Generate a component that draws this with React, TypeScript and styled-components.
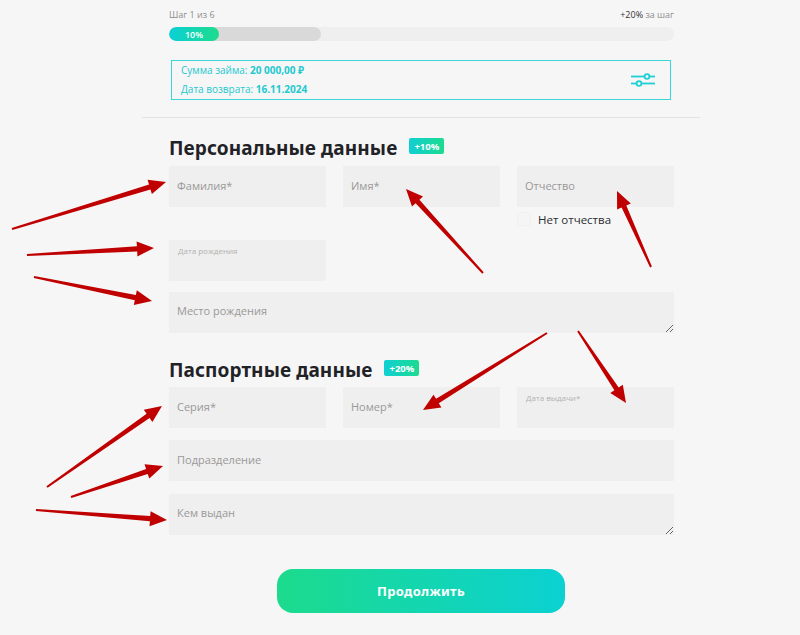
import styled, { createGlobalStyle } from "styled-components";

const Global = createGlobalStyle`
  html, body {
    margin: 0;
    padding: 0;
    background: #f6f6f6;
  }
  body {
    font-family: "Open Sans", "Noto Sans", Arial, sans-serif;
  }
  * {
    box-sizing: border-box;
  }
`;

const Page = styled.div`
  position: relative;
  width: 800px;
  height: 635px;
  overflow: hidden;
`;

const Wrapper = styled.div`
  margin-left: 142px;
  width: 558px;
  padding-top: 9px;
`;

const Column = styled.div`
  padding: 0 26px 0 27px;
`;

const StepRow = styled.div`
  display: flex;
  justify-content: space-between;
  font-size: 9px;
  line-height: 12px;
  color: #8d8d8d;
  b {
    font-weight: 400;
    color: #333;
  }
`;

const Track = styled.div`
  position: relative;
  margin-top: 6px;
  height: 14px;
  border-radius: 7px;
  background: #efefef;
  overflow: hidden;
`;

const Passed = styled.div`
  width: 152px;
  height: 100%;
  border-radius: 7px;
  background: #d9d9d9;
`;

const Fill = styled.div`
  position: absolute;
  left: 0;
  top: 0;
  height: 100%;
  border-radius: 7px;
  background: linear-gradient(90deg, #0ccfd6, #1ddc8c);
  color: #fff;
  font-size: 9px;
  font-weight: 600;
  display: flex;
  align-items: center;
  justify-content: center;
`;

const InfoBox = styled.div`
  margin: 19px 3px 0 2px;
  height: 40px;
  border: 1px solid #3ad6d8;
  display: flex;
  align-items: center;
  justify-content: space-between;
  padding: 0 14px 0 9px;
`;

const InfoLines = styled.div`
  display: flex;
  flex-direction: column;
  gap: 6px;
  font-size: 10px;
  line-height: 13px;
  color: #22c9d0;
  b {
    font-weight: 700;
  }
`;

const Divider = styled.div`
  margin-top: 17px;
  height: 1px;
  background: #e2e2e2;
`;

const Heading = styled.div<{ $top: number }>`
  display: flex;
  align-items: center;
  gap: 12px;
  margin-top: ${(p) => p.$top}px;
  height: 20px;
  h2 {
    margin: 0;
    font-family: "Noto Sans", "Open Sans", sans-serif;
    font-size: 19px;
    font-weight: 700;
    color: #1f2226;
    letter-spacing: 0.1px;
  }
`;

const Badge = styled.span`
  display: inline-flex;
  align-items: center;
  height: 16px;
  padding: 0 5px;
  border-radius: 2px;
  background: linear-gradient(90deg, #10cfd3, #1cdb90);
  color: #fff;
  font-size: 9.5px;
  font-weight: 700;
  margin-top: -4px;
`;

const Row = styled.div<{ $top: number }>`
  display: grid;
  grid-template-columns: repeat(3, 157px);
  column-gap: 17px;
  margin-top: ${(p) => p.$top}px;
`;

const Input = styled.input<{ $top?: number }>`
  display: block;
  width: 100%;
  height: 41px;
  margin-top: ${(p) => p.$top ?? 0}px;
  border: none;
  outline: none;
  background: #efefef;
  padding: 0 8px 3px;
  font-family: "Open Sans", sans-serif;
  font-size: 11px;
  &::placeholder {
    color: #9a9898;
  }
`;

const Area = styled.textarea<{ $top: number }>`
  display: block;
  width: 100%;
  height: 41px;
  margin-top: ${(p) => p.$top}px;
  border: none;
  outline: none;
  background: #efefef;
  padding: 12px 8px 0;
  resize: vertical;
  font-family: "Open Sans", sans-serif;
  font-size: 11px;
  line-height: 14px;
  &::placeholder {
    color: #9a9898;
  }
`;

const DateField = styled.div<{ $top?: number }>`
  height: 41px;
  margin-top: ${(p) => p.$top ?? 0}px;
  background: #efefef;
  padding: 5px 9px 0;
  font-size: 8px;
  color: #b3b1b1;
`;

const CheckRow = styled.label`
  grid-column: 3;
  display: flex;
  align-items: center;
  gap: 7px;
  margin-top: 4px;
  height: 16px;
  font-size: 11.5px;
  color: #2a2d31;
`;

const Box = styled.span`
  width: 14px;
  height: 14px;
  border: 1px solid #f1f1f1;
  background: #f5f5f5;
`;

const ButtonRow = styled.div`
  display: flex;
  justify-content: center;
  margin-top: 34px;
`;

const Button = styled.button`
  width: 288px;
  height: 44px;
  border: none;
  border-radius: 16px;
  background: linear-gradient(90deg, #1cdb8d, #0bd1d2);
  color: #fff;
  font-family: "Noto Sans", "Open Sans", sans-serif;
  font-size: 13px;
  font-weight: 700;
  letter-spacing: 0.3px;
`;

const Overlay = styled.svg`
  position: absolute;
  left: 0;
  top: 0;
  pointer-events: none;
`;

function Sliders() {
  return (
    <svg width="26" height="14" viewBox="0 0 26 14" fill="none" stroke="#1fd0d6" strokeWidth="1.8">
      <line x1="1" y1="3.5" x2="25" y2="3.5" />
      <line x1="1" y1="10.5" x2="25" y2="10.5" />
      <circle cx="17" cy="3.5" r="2.4" fill="#f6f6f6" />
      <circle cx="9" cy="10.5" r="2.4" fill="#f6f6f6" />
    </svg>
  );
}

type Arrow = [number, number, number, number];

const arrows: Arrow[] = [
  [12, 229, 166, 182],
  [27, 255, 154, 248],
  [34, 277, 152, 301],
  [483, 273, 406, 189],
  [651, 267, 617, 191],
  [547, 333, 423, 410],
  [578, 331, 626, 403],
  [47, 487, 162, 406],
  [71, 497, 163, 466],
  [36, 510, 167, 520],
];

function arrowPoints([x1, y1, x2, y2]: Arrow) {
  const dx = x2 - x1;
  const dy = y2 - y1;
  const len = Math.hypot(dx, dy);
  const ux = dx / len;
  const uy = dy / len;
  const nx = -uy;
  const ny = ux;
  const head = 17;
  const bx = x2 - ux * head;
  const by = y2 - uy * head;
  const pts = [
    [x1 + nx * 1, y1 + ny * 1],
    [bx + nx * 2.6, by + ny * 2.6],
    [bx + nx * 7.5, by + ny * 7.5],
    [x2, y2],
    [bx - nx * 7.5, by - ny * 7.5],
    [bx - nx * 2.6, by - ny * 2.6],
    [x1 - nx * 1, y1 - ny * 1],
  ];
  return pts.map((p) => p.map((v) => v.toFixed(1)).join(",")).join(" ");
}

export default function App() {
  return (
    <>
      <Global />
      <Page>
        <Wrapper>
          <Column>
            <StepRow>
              <span>Шаг 1 из 6</span>
              <span>
                <b>+20%</b> за шаг
              </span>
            </StepRow>
            <Track>
              <Passed />
              <Fill style={{ width: 50 }}>10%</Fill>
            </Track>
            <InfoBox>
              <InfoLines>
                <span>
                  Сумма займа: <b>20 000,00 ₽</b>
                </span>
                <span>
                  Дата возврата: <b>16.11.2024</b>
                </span>
              </InfoLines>
              <Sliders />
            </InfoBox>
          </Column>
          <Divider />
          <Column>
            <Heading $top={20}>
              <h2>Персональные данные</h2>
              <Badge>+10%</Badge>
            </Heading>
            <Row $top={8}>
              <Input placeholder="Фамилия*" />
              <Input placeholder="Имя*" />
              <Input placeholder="Отчество" />
              <CheckRow>
                <Box />
                Нет отчества
              </CheckRow>
            </Row>
            <Row $top={13}>
              <DateField>Дата рождения</DateField>
            </Row>
            <Area $top={11} placeholder="Место рождения" />
            <Heading $top={27}>
              <h2>Паспортные данные</h2>
              <Badge>+20%</Badge>
            </Heading>
            <Row $top={7}>
              <Input placeholder="Серия*" />
              <Input placeholder="Номер*" />
              <DateField>Дата выдачи*</DateField>
            </Row>
            <Input $top={12} placeholder="Подразделение" />
            <Area $top={13} placeholder="Кем выдан" />
          </Column>
          <ButtonRow>
            <Button>Продолжить</Button>
          </ButtonRow>
        </Wrapper>
        <Overlay width="800" height="635" viewBox="0 0 800 635">
          {arrows.map((a, i) => (
            <polygon key={i} points={arrowPoints(a)} fill="#c00000" />
          ))}
        </Overlay>
      </Page>
    </>
  );
}
